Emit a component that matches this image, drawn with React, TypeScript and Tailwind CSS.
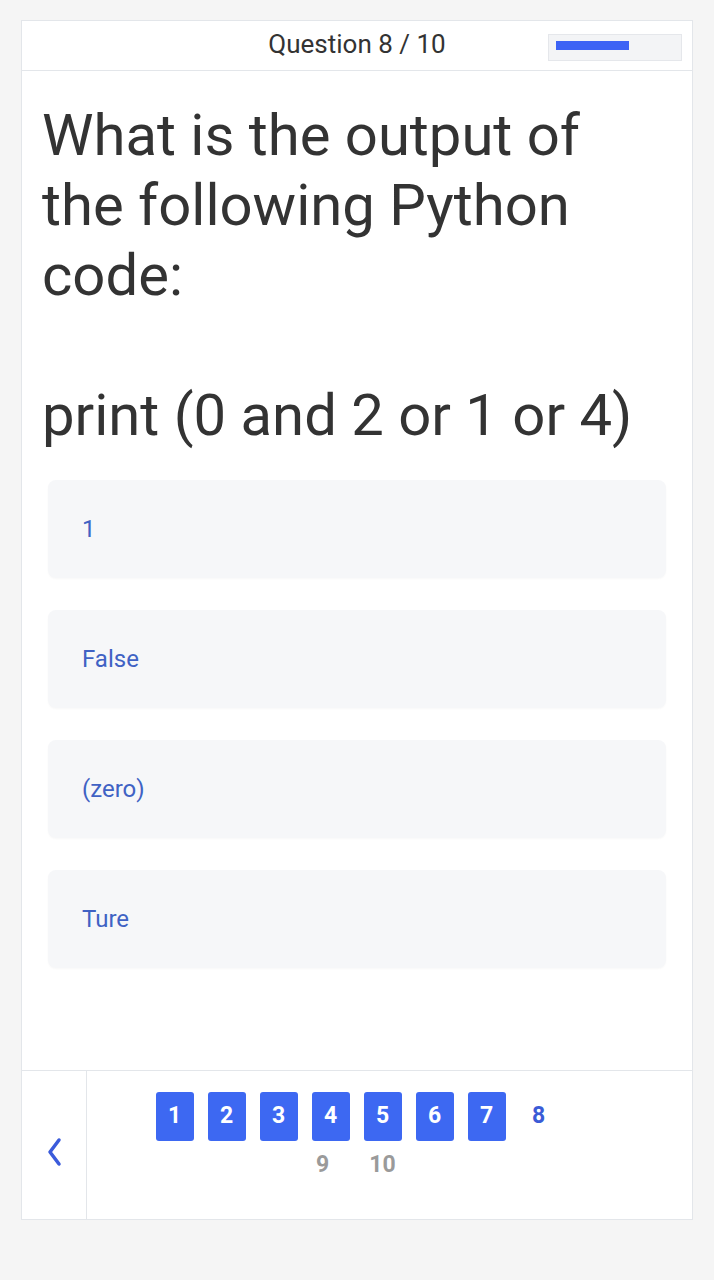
import React from "react";

const options = ["1", "False", "(zero)", "Ture"];

export default function App() {
  const pages = Array.from({ length: 10 }, (_, i) => i + 1);
  const current = 8;

  return (
    <div className="min-h-[1280px] bg-[#f5f5f5] pt-[20px]" style={{ fontFamily: "Roboto, 'Noto Sans', sans-serif" }}>
      <div className="ml-[21px] w-[672px] h-[1200px] bg-white border border-[#e3e6ea] flex flex-col">
        {/* Header */}
        <div className="relative h-[50px] border-b border-[#e3e6ea] flex items-center justify-center">
          <span className="text-[26px] leading-none text-[#333] -mt-[4px]">Question 8 / 10</span>
          <div className="absolute right-[10px] top-[13px] w-[134px] h-[27px] bg-[#f3f4f6] border border-[#e5e7eb] px-[7px] pt-[6px]">
            <div className="h-[9px] w-[73px] bg-[#3d63f5]" />
          </div>
        </div>

        {/* Body */}
        <div className="flex-1 pt-[29px]">
          <p className="px-[20px] text-[58px] leading-[70px] text-[#333] whitespace-pre-line">
            {"What is the output of the following Python code:\n\nprint (0 and 2 or 1 or 4)"}
          </p>
          <div className="mt-[30px] mx-[26px] flex flex-col gap-[32px]">
            {options.map((opt) => (
              <div
                key={opt}
                className="h-[98px] rounded-[8px] bg-[#f6f7f9] shadow-[0_1px_2px_rgba(0,0,0,0.03)] flex items-center pl-[34px]"
              >
                <span className="text-[24px] text-[#4062c4]">{opt}</span>
              </div>
            ))}
          </div>
        </div>

        {/* Footer */}
        <div className="h-[149px] border-t border-[#e3e6ea] flex">
          <div className="w-[65px] border-r border-[#e3e6ea] flex items-center justify-center pt-[14px]">
            <svg width="16" height="30" viewBox="0 0 16 30" fill="none">
              <path d="M13 3 L4 15 L13 27" stroke="#3b5bdb" strokeWidth="3.5" strokeLinecap="round" strokeLinejoin="round" />
            </svg>
          </div>
          <div className="flex-1 pt-[21px]">
            <div className="mx-auto w-[420px] flex flex-wrap justify-center gap-x-[14px]">
              {pages.map((p) => {
                const done = p < current;
                const active = p === current;
                return (
                  <div
                    key={p}
                    className={
                      (p >= 10 ? "w-[54px] " : "w-[38px] ") +
                      "h-[49px] rounded-[3px] flex items-center justify-center text-[23px] font-bold " +
                      (done ? "bg-[#3d68f2] text-white" : active ? "text-[#3b5bd6]" : "text-[#9a9a9a]")
                    }
                  >
                    {p}
                  </div>
                );
              })}
            </div>
          </div>
          <div className="w-[66px]" />
        </div>
      </div>
    </div>
  );
}
